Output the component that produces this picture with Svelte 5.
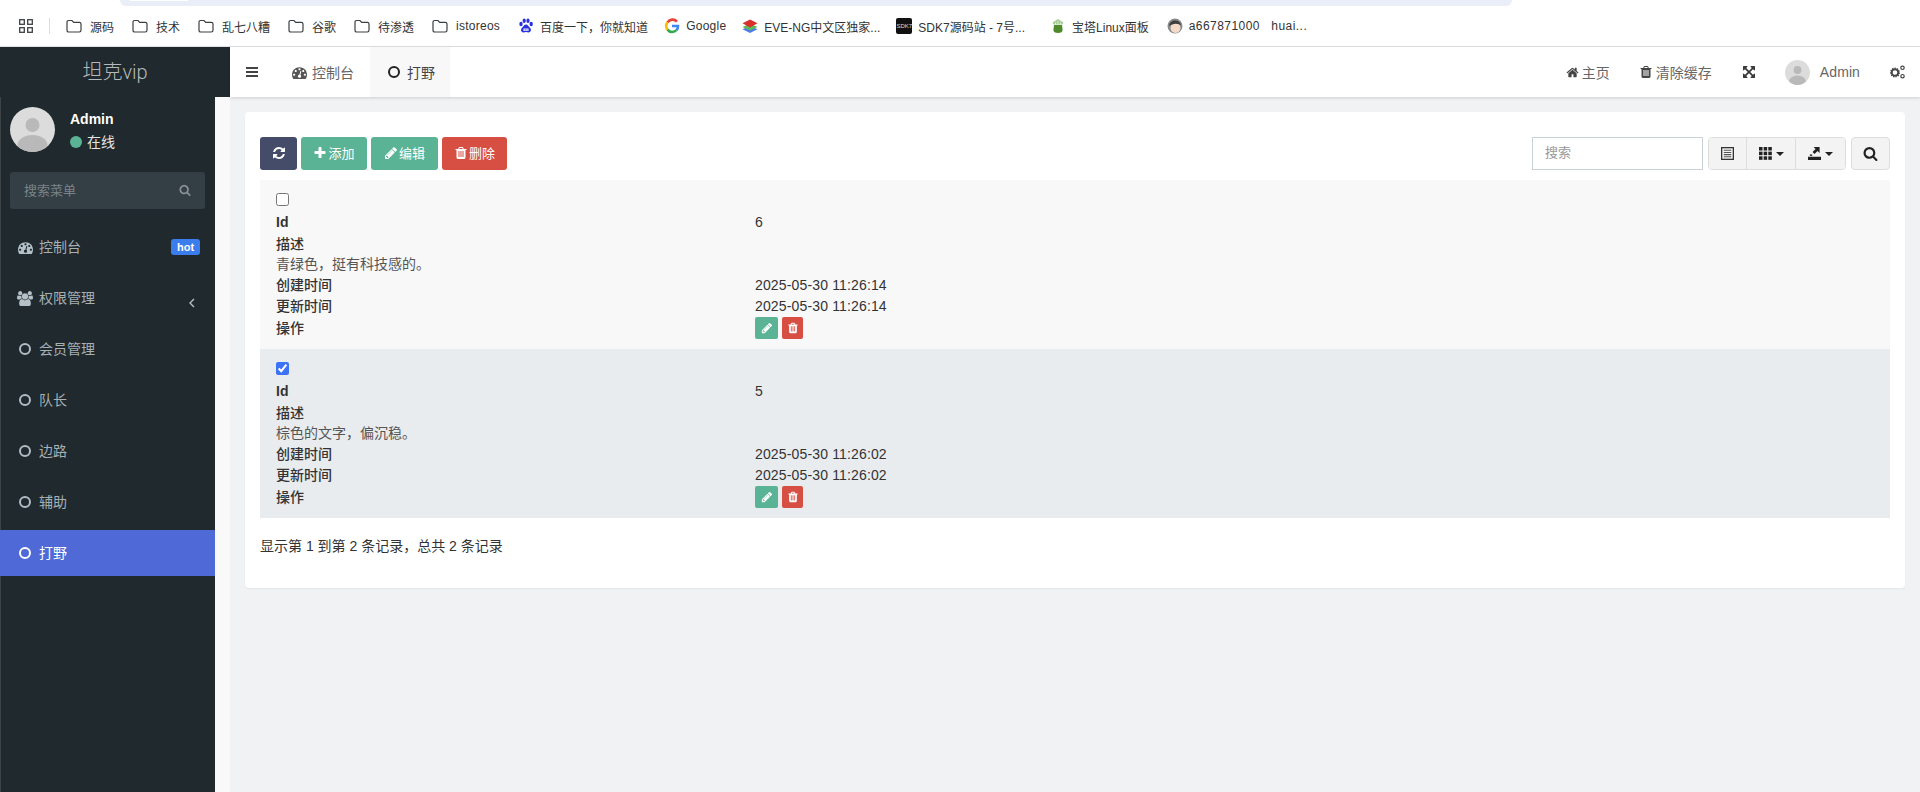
<script>
  const P = {
    home: 'M1472 992v480q0 26-19 45t-45 19h-384v-384h-256v384h-384q-26 0-45-19t-19-45v-480q0-1 .5-3t.5-3l575-474 575 474q1 2 1 6zm223-69l-62 74q-8 9-21 11h-3q-13 0-21-7l-692-577-692 577q-12 8-24 7-13-2-21-11l-62-74q-8-10-7-23.500t11-21.500l719-599q32-26 76-26t76 26l244 204v-195q0-14 9-23t23-9h192q14 0 23 9t9 23v408l219 182q10 8 11 21.500t-7 23.500z',
    trash: 'M704 1376v-704q0-14-9-23t-23-9h-64q-14 0-23 9t-9 23v704q0 14 9 23t23 9h64q14 0 23-9t9-23zm256 0v-704q0-14-9-23t-23-9h-64q-14 0-23 9t-9 23v704q0 14 9 23t23 9h64q14 0 23-9t9-23zm256 0v-704q0-14-9-23t-23-9h-64q-14 0-23 9t-9 23v704q0 14 9 23t23 9h64q14 0 23-9t9-23zm-544-992h448l-48-117q-7-9-17-11h-317q-10 2-17 11zm928 32v64q0 14-9 23t-23 9h-96v948q0 83-47 143.500t-113 60.500h-832q-66 0-113-58.500t-47-141.500v-952h-96q-14 0-23-9t-9-23v-64q0-14 9-23t23-9h309l70-167q15-37 54-63t79-26h320q40 0 79 26t54 63l70 167h309q14 0 23 9t9 23z',
    plus: 'M1600 736v192q0 40-28 68t-68 28h-416v416q0 40-28 68t-68 28h-192q-40 0-68-28t-28-68v-416h-416q-40 0-68-28t-28-68v-192q0-40 28-68t68-28h416v-416q0-40 28-68t68-28h192q40 0 68 28t28 68v416h416q40 0 68 28t28 68z',
    pencil: 'M491 1536l91-91-235-235-91 91v107h128v128h107zm523-928q0-22-22-22-10 0-17 7l-542 542q-7 7-7 17 0 22 22 22 10 0 17-7l542-542q7-7 7-17zm-54-192l416 416-832 832h-416v-416zm683 96q0 53-37 90l-166 166-416-416 166-165q36-38 90-38 53 0 91 38l235 234q37 39 37 91z',
    search: 'M1216 832q0-185-131.500-316.500t-316.500-131.500-316.500 131.500-131.500 316.500 131.500 316.500 316.500 131.500 316.500-131.500 131.500-316.500zm512 832q0 52-38 90t-90 38q-54 0-90-38l-343-342q-179 124-399 124-143 0-273.500-55.500t-225-150-150-225-55.500-273.500 55.500-273.500 150-225 225-150 273.500-55.500 273.500 55.500 225 150 150 225 55.500 273.500q0 220-124 399l343 343q37 37 37 90z',
    refresh: 'M1639 1056q0 5-1 7-64 268-268 434.500t-478 166.500q-146 0-282.500-55t-243.500-157l-129 129q-19 19-45 19t-45-19-19-45v-448q0-26 19-45t45-19h448q26 0 45 19t19 45-19 45l-137 137q71 66 161 102t187 36q134 0 250-65t186-179q11-17 53-117 8-23 30-23h192q13 0 22.500 9.500t9.500 22.500zm25-800v448q0 26-19 45t-45 19h-448q-26 0-45-19t-19-45 19-45l138-138q-148-137-349-137-134 0-250 65t-186 179q-11 17-53 117-8 23-30 23h-199q-13 0-22.500-9.500t-9.500-22.500v-7q65-268 270-434.500t480-166.500q146 0 284 55.500t245 156.500l130-129q19-19 45-19t45 19 19 45z',
    expand: 'M1411 541l-355 355 355 355 144-144q29-31 70-14 39 17 39 59v448q0 26-19 45t-45 19h-448q-42 0-59-40-17-39 14-69l144-144-355-355-355 355 144 144q31 30 14 69-17 40-59 40h-448q-26 0-45-19t-19-45v-448q0-42 40-59 39-17 69 14l144 144 355-355-355-355-144 144q-19 19-45 19-12 0-24-5-40-17-40-59v-448q0-26 19-45t45-19h448q42 0 59 40 17 39-14 69l-144 144 355 355 355-355-144-144q-31-30-14-69 17-40 59-40h448q26 0 45 19t19 45v448q0 42-39 59-13 5-25 5-26 0-45-19z',
    gauge: 'M384 1152q0-53-37.500-90.500t-90.500-37.500-90.500 37.500-37.500 90.500 37.500 90.500 90.500 37.500 90.500-37.500 37.500-90.500zm192-448q0-53-37.500-90.500t-90.500-37.500-90.500 37.500-37.500 90.500 37.500 90.500 90.500 37.500 90.500-37.500 37.500-90.500zm428 481l101-382q6-26-7.500-48.500t-38.500-29.500-48 6.500-30 39.500l-101 382q-60 5-107 43.500t-63 98.500q-20 77 20 146t117 89 146-20 89-117q16-60-6-117t-72-91zm660-33q0-53-37.500-90.500t-90.500-37.500-90.500 37.500-37.500 90.500 37.500 90.500 90.500 37.500 90.500-37.500 37.500-90.500zm-640-640q0-53-37.500-90.500t-90.500-37.500-90.500 37.500-37.500 90.500 37.500 90.500 90.500 37.500 90.500-37.500 37.500-90.500zm448 192q0-53-37.500-90.500t-90.500-37.500-90.500 37.500-37.500 90.500 37.500 90.500 90.500 37.500 90.500-37.500 37.500-90.500zm320 448q0 261-141 483-19 29-54 29h-1402q-35 0-54-29-141-221-141-483 0-182 71-348t191-286 286-191 348-71 348 71 286 191 191 286 71 348z',
    users: 'M593 896q-162 5-265 128h-134q-82 0-138-40.500t-56-118.500q0-353 124-353 6 0 43.500 21t97.500 42.500 119 21.500q67 0 133-23-5 37-5 66 0 139 81 256zm1071 637q0 120-73 189.500t-194 69.500h-874q-121 0-194-69.500t-73-189.500q0-53 3.500-103.500t14-109 26.500-108.500 43-97.500 62-81 85.500-53.500 111.500-20q10 0 43 21.500t73 48 107 48 135 21.500 135-21.500 107-48 73-48 43-21.500q61 0 111.500 20t85.500 53.500 62 81 43 97.500 26.500 108.500 14 109 3.500 103.500zm-1024-1277q0 106-75 181t-181 75-181-75-75-181 75-181 181-75 181 75 75 181zm704 384q0 159-112.500 271.500t-271.500 112.500-271.500-112.500-112.500-271.500 112.500-271.500 271.500-112.500 271.500 112.500 112.500 271.500zm576 225q0 78-56 118.500t-138 40.500h-134q-103-123-265-128 81-117 81-256 0-29-5-66 66 23 133 23 59 0 119-21.500t97.500-42.500 43.500-21q124 0 124 353zm-128-609q0 106-75 181t-181 75-181-75-75-181 75-181 181-75 181 75 75 181z'
  };

  const bookmarks = [
    { k: 'folder', t: '源码' }, { k: 'folder', t: '技术' }, { k: 'folder', t: '乱七八糟' },
    { k: 'folder', t: '谷歌' }, { k: 'folder', t: '待渗透' }, { k: 'folder', t: 'istoreos', latin: true },
    { k: 'baidu', t: '百度一下，你就知道' }, { k: 'google', t: 'Google', latin: true },
    { k: 'eve', t: 'EVE-NG中文区独家...' }, { k: 'sdk', t: 'SDK7源码站 - 7号...' },
    { k: 'bt', t: '宝塔Linux面板' }, { k: 'face', t: 'a667871000   huai...', latin: true }
  ];
  const menu = [
    { t: '控制台', i: 'gauge', badge: 'hot' },
    { t: '权限管理', i: 'users', chev: true },
    { t: '会员管理' }, { t: '队长' }, { t: '边路' }, { t: '辅助' },
    { t: '打野', active: true }
  ];
  const rows = [
    { id: 6, desc: '青绿色，挺有科技感的。', c: '2025-05-30 11:26:14', u: '2025-05-30 11:26:14', sel: false },
    { id: 5, desc: '棕色的文字，偏沉稳。', c: '2025-05-30 11:26:02', u: '2025-05-30 11:26:02', sel: true }
  ];
</script>

{#snippet fa(d, cls, vb = '0 0 1792 1792')}
  <svg class={cls} viewBox={vb} fill="currentColor" aria-hidden="true"><path {d} /></svg>
{/snippet}

{#snippet avatar(cls)}
  <svg class={cls} viewBox="0 0 45 45" aria-hidden="true">
    <defs><clipPath id={'c' + cls}><circle cx="22.500" cy="22.500" r="22.500" /></clipPath></defs>
    <circle cx="22.500" cy="22.500" r="22.500" fill="#dcdcdc" />
    <g clip-path={'url(#c' + cls + ')'} fill="#b9b9b9">
      <circle cx="22.500" cy="18" r="7" />
      <ellipse cx="22.500" cy="38" rx="15" ry="10" />
    </g>
  </svg>
{/snippet}

{#snippet favicon(k)}
  {#if k === 'folder'}
    <svg class="fav fold" viewBox="0 0 16 14" aria-hidden="true"><path d="M1 3.200q0-1.700 1.700-1.700h3.300l1.700 1.800h5.600q1.700 0 1.700 1.700v6.300q0 1.700-1.700 1.700H2.700Q1 13 1 11.300z" fill="none" stroke="#3c4043" stroke-width="1.200" /></svg>
  {:else if k === 'baidu'}
    <svg class="fav" viewBox="0 0 16 16" aria-hidden="true" fill="#2932e1"><ellipse cx="3" cy="6" rx="1.700" ry="2.200" /><ellipse cx="6.200" cy="2.800" rx="1.600" ry="2.200" /><ellipse cx="10" cy="2.800" rx="1.600" ry="2.200" /><ellipse cx="13.200" cy="6" rx="1.700" ry="2.200" /><path d="M8 6.500c2 0 2.500 2 4 3.300 1.700 1.500 1 4.700-1.500 4.700-1 0-1.500-.4-2.500-.4s-1.500.4-2.500.4c-2.500 0-3.200-3.200-1.500-4.700C5.500 8.500 6 6.500 8 6.500z" /><path d="M5.500 10.500h5v2.500h-5z" fill="#fff" /><path d="M7.200 10.800v2M9 10.800v2" stroke="#2932e1" stroke-width=".7" /></svg>
  {:else if k === 'google'}
    <svg class="fav" viewBox="0 0 16 16" aria-hidden="true" fill="none" stroke-width="2.600"><path d="M13 3.600A6 6 0 0 0 3.500 4.400" stroke="#ea4335" /><path d="M3.500 4.400a6 6 0 0 0 0 7.200" stroke="#fbbc05" /><path d="M3.500 11.600a6 6 0 0 0 9 .6" stroke="#34a853" /><path d="M12.500 12.200A6 6 0 0 0 14 8H8" stroke="#4285f4" /></svg>
  {:else if k === 'eve'}
    <svg class="fav" viewBox="0 0 16 16" aria-hidden="true"><path d="M8 8l7.500 3.200L8 15 .5 11.200z" fill="#4a7de8" /><path d="M8 5.500l7.500 3.500L8 12.500.5 9z" fill="#5cb85c" /><path d="M8 1.500l7.500 3.800L8 9.500.5 5.300z" fill="#d9302c" /></svg>
  {:else if k === 'sdk'}
    <span class="sdk">SDK7</span>
  {:else if k === 'bt'}
    <svg class="fav" viewBox="0 0 16 16" aria-hidden="true"><path d="M4 7h8l.6 5q0 3-4.600 3t-4.600-3z" fill="#4f8a2c" /><path d="M8 1l5.500 3.500-1 2H3.500l-1-2z" fill="#a6cf92" /><path d="M8 3v3.500M5.500 4.500v2M10.500 4.500v2" stroke="#fff" stroke-width=".6" /></svg>
  {:else}
    <svg class="fav" viewBox="0 0 16 16" aria-hidden="true"><circle cx="8" cy="8" r="7.500" fill="#8a8a8a" /><ellipse cx="8.500" cy="10" rx="5" ry="5" fill="#f5d9c8" /><path d="M2 8q1-6 7-5.500 4 .5 5 4.500-5-2-7-1-3 .5-5 2z" fill="#3c3c3c" /></svg>
  {/if}
{/snippet}

<div class="page">
  <div class="omni"><div class="omni-in"></div></div>
  <div class="bookmarks">
    <svg class="grid" viewBox="0 0 14 14" aria-hidden="true" fill="none" stroke="#3c4043" stroke-width="1.300"><rect x=".7" y=".7" width="4.600" height="4.600" /><rect x="8.700" y=".7" width="4.600" height="4.600" /><rect x=".7" y="8.700" width="4.600" height="4.600" /><rect x="8.700" y="8.700" width="4.600" height="4.600" /></svg>
    <span class="bsep"></span>
    <div class="blist">
      {#each bookmarks as b}
        <span class="bm" class:fd={b.k === 'folder'} class:sk={b.k === 'sdk'} class:fc={b.k === 'face'}>{@render favicon(b.k)}<span class="bt" class:latin={b.latin}>{b.t}</span></span>
      {/each}
    </div>
  </div>

  <div class="shell">
    <aside class="side">
      <div class="logo">坦克<span class="vip">vip</span></div>
      <div class="side-body">
        <div class="dark">
          <div class="user">
            {@render avatar('av-lg')}
            <div class="uinfo">
              <div class="uname">Admin</div>
              <div class="ustat"><span class="dot"></span>在线</div>
            </div>
          </div>
          <div class="msearch">
            <span>搜索菜单</span>
            {@render fa(P.search, 'ms-icon')}
          </div>
          <ul class="menu">
            {#each menu as m}
              <li class="mi" class:active={m.active}>
                <span class="mic">
                  {#if m.i === 'users'}
                    {@render fa(P.users, 'ic-users', '0 0 1920 1792')}
                  {:else if m.i}
                    {@render fa(P[m.i], 'ic-menu')}
                  {:else}
                    <span class="ring"></span>
                  {/if}
                </span>
                <span class="mt">{m.t}</span>
                {#if m.badge}<span class="badge">{m.badge}</span>{/if}
                {#if m.chev}
                  <svg class="chev" viewBox="0 0 8 12" aria-hidden="true"><path d="M6 2L2 6l4 4" fill="none" stroke="currentColor" stroke-width="1.400" /></svg>
                {/if}
              </li>
            {/each}
          </ul>
        </div>
        <div class="strip"></div>
      </div>
    </aside>

    <div class="main">
      <header class="nav">
        <svg class="burger" viewBox="0 0 12 10" aria-hidden="true" fill="#444"><rect width="12" height="2" /><rect y="4" width="12" height="2" /><rect y="8" width="12" height="2" /></svg>
        <div class="tab t1">{@render fa(P.gauge, 'ic-tab')}<span>控制台</span></div>
        <div class="tab t2"><span class="ring dark-ring"></span><span>打野</span></div>
        <div class="nav-right">
          <span class="ni n-home">{@render fa(P.home, 'ic-home')}<span>主页</span></span>
          <span class="ni n-clear">{@render fa(P.trash, 'ic-trash')}<span>清除缓存</span></span>
          {@render fa(P.expand, 'ic-exp')}
          <span class="ni n-user">{@render avatar('av-sm')}<span class="aname">Admin</span></span>
          <svg class="cogs" viewBox="0 0 15 14" aria-hidden="true" fill="none" stroke="#444"><circle cx="5" cy="7.500" r="3.200" stroke-width="1.800" /><circle cx="5" cy="7.500" r="4.300" stroke-width="1.300" stroke-dasharray="1.400 1.000" /><circle cx="12.500" cy="2.800" r="1.700" stroke-width="1.200" /><circle cx="12.500" cy="11.200" r="1.700" stroke-width="1.200" /></svg>
        </div>
      </header>

      <section class="content">
        <div class="panel">
          <div class="toolbar">
            <div class="tl">
              <button class="btn navy">{@render fa(P.refresh, 'ic-btn')}</button>
              <button class="btn green w66">{@render fa(P.plus, 'ic-btn')}<span>添加</span></button>
              <button class="btn green w67">{@render fa(P.pencil, 'ic-btn')}<span>编辑</span></button>
              <button class="btn red w65">{@render fa(P.trash, 'ic-btn')}<span>删除</span></button>
            </div>
            <div class="tr">
              <div class="search">搜索</div>
              <div class="group">
                <button class="gb g1">
                  <svg class="ic-tool" viewBox="0 0 14 14" aria-hidden="true"><rect x=".7" y=".7" width="12.600" height="12.600" fill="none" stroke="#333" stroke-width="1.400" /><path d="M3 3.500h8M3 5.800h8M3 8.200h8M3 10.500h8" stroke="#555" stroke-width="1.100" /></svg>
                </button>
                <button class="gb g2">
                  <svg class="ic-tool" viewBox="0 0 14 14" aria-hidden="true" fill="#222"><rect width="3.800" height="3.800" /><rect x="5" width="3.800" height="3.800" /><rect x="10" width="3.800" height="3.800" /><rect y="5" width="3.800" height="3.800" /><rect x="5" y="5" width="3.800" height="3.800" /><rect x="10" y="5" width="3.800" height="3.800" /><rect y="10" width="3.800" height="3.800" /><rect x="5" y="10" width="3.800" height="3.800" /><rect x="10" y="10" width="3.800" height="3.800" /></svg>
                  <span class="caret"></span>
                </button>
                <button class="gb g3">
                  <svg class="ic-tool" viewBox="0 0 14 14" aria-hidden="true" fill="#222"><rect y="10.500" width="14" height="3.500" /><path d="M6 0h6.500v6.500L10.300 4.300 7 7.600 4.900 5.500 8.200 2.200z" /><rect x="2" y="8" width="2.500" height="1.500" /></svg>
                  <span class="caret"></span>
                </button>
              </div>
              <button class="gb solo">{@render fa(P.search, 'ic-search')}</button>
            </div>
          </div>

          <div class="table">
            {#each rows as r}
              <div class="row" class:sel={r.sel}>
                <input type="checkbox" checked={r.sel} />
                <div class="line l-id"><span class="k idk">Id</span><span class="v">{r.id}</span></div>
                <div class="line l-d"><span class="k">描述</span></div>
                <div class="line l-x"><span class="desc">{r.desc}</span></div>
                <div class="line l-c"><span class="k">创建时间</span><span class="v">{r.c}</span></div>
                <div class="line l-u"><span class="k">更新时间</span><span class="v">{r.u}</span></div>
                <div class="line l-a">
                  <span class="k">操作</span>
                  <span class="v acts">
                    <span class="mini green m23">{@render fa(P.pencil, 'ic-mini')}</span>
                    <span class="mini red m21">{@render fa(P.trash, 'ic-mini')}</span>
                  </span>
                </div>
              </div>
            {/each}
          </div>
          <div class="foot">显示第 1 到第 2 条记录，总共 2 条记录</div>
        </div>
      </section>
    </div>
  </div>
</div>

<style>
  :global(body) { margin: 0; }
  .page {
    width: 1920px; height: 792px; overflow: hidden; background: #fff;
    font-family: "Liberation Sans", "Noto Sans CJK SC", sans-serif;
    font-size: 14px; color: #333;
  }
  .omni { height: 6px; margin: 0 408px 0 120px; background: #e9eef8; border-radius: 0 0 16px 16px; }
  .omni-in { width: 58px; height: 1px; margin-left: 10px; background: #fff; }
  .bookmarks {
    height: 41px; box-sizing: border-box; display: flex; align-items: center;
    padding-left: 19px; border-bottom: 1px solid #dfe1e5; background: #fff;
  }
  .grid { width: 14px; height: 14px; }
  .bsep { width: 1px; height: 16px; background: #d3dcf0; margin: 0 16px; }
  .blist { display: flex; align-items: center; gap: 16px; }
  .bm { display: flex; align-items: center; gap: 6px; font-size: 12px; color: #333; white-space: pre; }
  .bm.fd { gap: 8px; margin-right: 2px; }
  .bm.sk { margin-right: 9px; }
  .bm.fc { margin-left: 2px; }
  .bt.latin { letter-spacing: .25px; }
  .fc .bt.latin { letter-spacing: .45px; }
  .fav { width: 16px; height: 16px; flex: none; }
  .fold { height: 14px; }
  .sdk {
    width: 16px; height: 16px; background: #111; color: #ddd; font-size: 6px; border-radius: 2px;
    display: flex; align-items: center; justify-content: center; overflow: hidden;
  }

  .shell { display: flex; height: 745px; }
  .side { width: 230px; flex: none; display: flex; flex-direction: column; }
  .logo {
    height: 50px; line-height: 50px; text-align: center; background: #20292d; color: #b5b9bb;
    font-size: 20px; font-weight: 300;
  }
  .vip { font-family: Roboto, sans-serif; font-weight: 300; }
  .side-body { flex: 1; display: flex; min-height: 0; }
  .dark { width: 215px; background: #20292d; border-left: 1px solid #3c4447; box-sizing: border-box; }
  .strip { width: 15px; background: #f9f9f9; }
  .user { display: flex; padding: 10px 0 0 9px; height: 65px; box-sizing: content-box; gap: 15px; }
  .av-lg { width: 45px; height: 45px; }
  .uinfo { padding-top: 2px; }
  .uname { color: #fff; font-weight: bold; font-size: 14px; line-height: 20px; }
  .ustat { color: #e4e6e7; font-size: 14px; line-height: 20px; margin-top: 3px; display: flex; align-items: center; gap: 5px; }
  .dot { width: 12px; height: 12px; border-radius: 50%; background: #5ab394; }
  .msearch {
    margin-left: 9px; width: 195px; height: 37px; box-sizing: border-box; border-radius: 3px;
    background: #343e45; color: #7b8388; font-size: 13px; display: flex; align-items: center;
    justify-content: space-between; padding: 0 14px 2px 14px;
  }
  .ms-icon { width: 12px; height: 12px; color: #8a9196; }
  .menu { list-style: none; margin: 15px 0 0; padding: 0; }
  .mi {
    height: 46px; margin: 0 0 5px -1px; display: flex; align-items: center; color: #a7b0b5;
    padding-left: 18px; position: relative;
  }
  .mic { width: 21px; display: flex; align-items: center; flex: none; }
  .mt { margin-bottom: 2px; }
  .mi.active { background: #4f6ad7; color: #fff; }
  .ic-menu { width: 15px; height: 15px; color: #b4c0c7; }
  .ic-users { width: 16px; height: 15px; margin-left: -1px; color: #b4c0c7; }
  .ring {
    display: block; width: 12px; height: 12px; box-sizing: border-box; border: 2px solid #b0bcc2;
    border-radius: 50%; margin-left: 1px;
  }
  .active .ring { border-color: #fff; }
  .badge {
    margin-left: auto; margin-right: 15px; height: 16px; width: 29px; border-radius: 3px; background: #3b7ded;
    color: #fff; font-size: 11px; font-weight: bold; line-height: 16px; text-align: center;
  }
  .chev { position: absolute; left: 188px; top: 22px; width: 8px; height: 12px; color: #b4c0c7; }

  .main { flex: 1; min-width: 0; display: flex; flex-direction: column; background: #f1f2f4; }
  .nav {
    height: 50px; background: #fff; display: flex; align-items: center; flex: none;
    box-shadow: 0 1px 3px rgba(0, 0, 0, .15); position: relative; color: #666;
  }
  .burger { width: 12px; height: 10px; margin: 0 19px 0 16px; }
  .tab { height: 50px; display: flex; align-items: center; gap: 5px; box-sizing: border-box; }
  .t1 { width: 93px; padding-left: 15px; }
  .t2 { width: 80px; padding-left: 18px; background: #f8f8f8; color: #444; gap: 7px; }
  .ic-tab { width: 15px; height: 15px; color: #555; }
  .dark-ring { border-color: #222; margin: 0; }
  .nav-right { margin-left: auto; display: flex; align-items: center; padding-right: 15px; color: #666; }
  .ni { display: flex; align-items: center; }
  .ic-home { width: 13px; height: 13px; color: #444; margin-right: 3px; }
  .ic-trash { width: 14px; height: 14px; color: #444; margin-right: 3px; }
  .n-home { margin-right: 29px; }
  .n-clear { margin-right: 30px; }
  .ic-exp { width: 14px; height: 14px; color: #3a3a3a; margin-right: 29px; }
  .av-sm { width: 25px; height: 25px; margin-right: 10px; }
  .aname { font-size: 14px; letter-spacing: .1px; }
  .n-user { margin-right: 30px; }
  .cogs { width: 15px; height: 14px; }

  .content { flex: 1; padding: 15px 15px 0; }
  .panel {
    height: 476px; box-sizing: border-box; background: #fff; border-radius: 4px; padding: 25px 15px 0;
    box-shadow: 0 1px 2px rgba(0, 0, 0, .05);
  }
  .toolbar { display: flex; justify-content: space-between; height: 33px; margin-bottom: 10px; }
  .tl { display: flex; gap: 4px; }
  .tr { display: flex; }
  .btn {
    height: 33px; border: 0; border-radius: 3px; color: #fff; font: inherit; font-size: 13px; padding: 0 0 2px;
    display: flex; align-items: center; justify-content: center; gap: 1px;
  }
  .navy { width: 37px; background: #444c69; }
  .green { background: #5ab394; }
  .red { background: #d74f42; }
  .w66 { width: 66px; } .w67 { width: 67px; } .w65 { width: 65px; }
  .ic-btn { width: 14px; height: 14px; }
  .search {
    width: 171px; height: 33px; box-sizing: border-box; border: 1px solid #ccd0d9; padding-left: 12px;
    line-height: 30px; font-size: 13px; color: #999; margin-right: 5px;
  }
  .group { display: flex; border: 1px solid #ddd; border-radius: 4px; overflow: hidden; margin-right: 5px; }
  .gb {
    background: #f3f3f3; border: 0; padding: 0; height: 31px; display: flex; align-items: center;
    justify-content: center; gap: 4px; color: #222;
  }
  .g1 { width: 37px; }
  .g2 { width: 49px; border-left: 1px solid #ddd; }
  .g3 { width: 50px; border-left: 1px solid #ddd; }
  .solo { width: 39px; height: 33px; box-sizing: border-box; border: 1px solid #ddd; border-radius: 4px; }
  .ic-tool { width: 13px; height: 13px; }
  .ic-search { width: 15px; height: 15px; }
  .caret { width: 0; height: 0; border: 4px solid transparent; border-top-color: #222; border-bottom: 0; }

  .row { height: 169px; box-sizing: border-box; padding: 13px 16px 0; background: #f8f8f8; }
  .row.sel { background: #e9ecef; }
  .row input { display: block; margin: 0; width: 13px; height: 13px; accent-color: #3b72f6; }
  .line { display: flex; height: 21px; line-height: 21px; }
  .k { width: 479px; flex: none; font-weight: bold; font-size: 14px; color: #333; }
  .row .k:not(.idk) { font-weight: 500; }
  .v { color: #333; letter-spacing: .15px; }
  .desc { color: #555; }
  .l-id { margin-top: 6px; }
  .l-d { margin-top: 1px; }
  .l-x { margin-top: -1px; height: 20px; line-height: 20px; }
  .l-c { margin-top: 1px; }
  .acts { display: flex; gap: 4px; }
  .l-a { height: 22px; line-height: 22px; }
  .mini { display: flex; align-items: center; justify-content: center; height: 22px; border-radius: 2px; color: #fff; }
  .m23 { width: 23px; } .m21 { width: 21px; }
  .ic-mini { width: 12px; height: 12px; }
  .foot { margin-top: 18px; line-height: 20px; color: #333; }
</style>
